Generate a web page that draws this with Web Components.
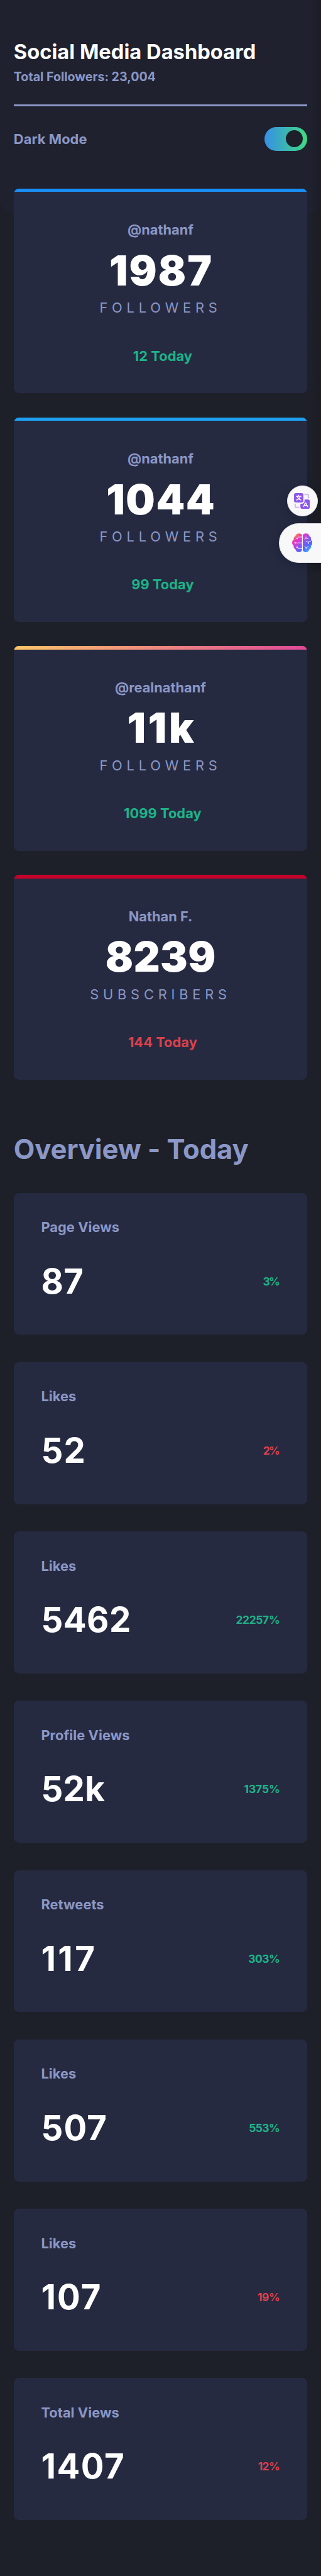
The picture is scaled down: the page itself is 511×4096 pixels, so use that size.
<!DOCTYPE html>
<html lang="en">
<head>
<meta charset="utf-8">
<title>Social Media Dashboard</title>
<style>
  /* 1rem is 100 design pixels of the 750-wide layout */
  html { font-size: 68.1333px; }
  body {
    margin: 0; position: relative; overflow-x: hidden; min-height: 100vh;
    background: #1e2029; color: #fff;
    font-family: Inter, "Liberation Sans", sans-serif;
    --muted: #8b97c6; --card: #252a41; --up: #1db489; --down: #dc414c;
  }
</style>
</head>
<body>
<social-dashboard></social-dashboard>
<side-tools></side-tools>
<script>
const define = (name, html) => customElements.define(name, class extends HTMLElement {
  constructor() {
    super();
    const t = document.createElement('template');
    t.innerHTML = html;
    this.attachShadow({ mode: 'open' }).append(t.content.cloneNode(true));
  }
});

define('mode-toggle', `
<style>
  :host { display: flex; justify-content: flex-end; align-items: center; box-sizing: border-box; width: 1rem; height: .56rem; padding: 0 .1rem;
    border-radius: .28rem; background: linear-gradient(90deg, #378fe6, #3eda82); }
  i { width: .4rem; height: .4rem; border-radius: 50%; background: #1e2029; }
</style><i></i>`);

define('page-header', `
<style>
  :host { display: block; box-sizing: border-box; height: 5rem; padding: .912rem .32rem 0; background: #1f212e; border-radius: 0 0 .4rem .4rem; }
  h1 { margin: 0 0 .113rem; font-size: .48rem; line-height: .6rem; font-weight: 700; }
  p { margin: 0; font-size: .288rem; line-height: .35rem; font-weight: 700; color: var(--muted); }
  hr { margin: .465rem 0 .48rem; border: 0; height: .04rem; background: var(--muted); }
  .row { display: flex; justify-content: space-between; align-items: center; color: var(--muted); font-size: .32rem; line-height: .4rem; font-weight: 700; }
  .row span { margin-top: .014rem; letter-spacing: .0015rem; }
</style>
<h1><slot name="title"></slot></h1><p><slot name="total"></slot></p><hr>
<div class="row"><span>Dark Mode</span><mode-toggle></mode-toggle></div>`);

define('follower-card', `
<style>
  :host { display: flex; flex-direction: column; align-items: center; box-sizing: border-box; height: 4.78rem;
    border-radius: .12rem; overflow: hidden; background: var(--card); }
  .bar { align-self: stretch; height: .08rem; background: var(--brand); margin-bottom: .691rem; }
  .name { font-size: .32rem; line-height: .4rem; font-weight: 700; color: var(--muted); }
  .num { margin-top: .267rem; font-size: .96rem; line-height: .96rem; font-weight: 900; letter-spacing: var(--track); margin-right: calc(var(--track) * -1); }
  .unit { margin-top: .193rem; font-size: .32rem; line-height: .4rem; font-weight: 400; letter-spacing: .1rem; color: var(--muted); text-transform: uppercase; }
  .today { margin-top: .72rem; padding-left: .1rem; font-size: .32rem; line-height: .4rem; font-weight: 700; letter-spacing: .001rem; color: var(--up); }
  :host([down]) .today { color: var(--down); }
</style>
<div class="bar"></div><div class="name"><slot name="name"></slot></div><div class="num"><slot name="num"></slot></div>
<div class="unit"><slot name="unit"></slot></div><div class="today"><slot name="today"></slot></div>`);

define('stat-card', `
<style>
  :host { display: block; box-sizing: border-box; height: 3.312rem; padding: .606rem .64rem 0; border-radius: .12rem; background: var(--card); }
  .label { font-size: .32rem; line-height: .4rem; font-weight: 700; letter-spacing: .001rem; color: var(--muted); }
  .row { margin-top: .65rem; display: flex; justify-content: space-between; align-items: center; }
  .num { font-size: .8rem; line-height: .8rem; font-weight: 700; letter-spacing: var(--track); }
  .pct { margin-top: .03rem; font-size: .256rem; line-height: .325rem; font-weight: 700; letter-spacing: var(--ptrack); margin-right: calc(var(--ptrack) * -1); color: var(--up); }
  :host([down]) .pct { color: var(--down); }
</style>
<div class="label"><slot name="label"></slot></div>
<div class="row"><span class="num"><slot name="num"></slot></span><span class="pct"><slot name="pct"></slot></span></div>`);

/* name, count, unit, change, brand colour, tracking of the count */
const followers = [
  ['@nathanf', '1987', 'Followers', '12 Today', '#198ef5', .030],
  ['@nathanf', '1044', 'Followers', '99 Today', '#1da1f2', .023],
  ['@realnathanf', '11k', 'Followers', '1099 Today', 'linear-gradient(90deg, #fdc468, #df4996)', .054],
  ['Nathan F.', '8239', 'Subscribers', '144 Today', '#c4032a', .005, 'down'],
].map(([n, v, u, t, c, k, d = '']) => `<follower-card ${d} style="--brand:${c};--track:${k}rem"><span slot="name">${n}</span><span slot="num">${v}</span><span slot="unit">${u}</span><span slot="today">${t}</span></follower-card>`).join('');

/* label, value, change, tracking of the value, tracking of the change */
const stats = [
  ['Page Views', '87', '3%', .006, -.0272], ['Likes', '52', '2%', .018, -.0272, 'down'],
  ['Likes', '5462', '22257%', .007, -.0052], ['Profile Views', '52k', '1375%', .005, -.0019],
  ['Retweets', '117', '303%', .050, -.0083], ['Likes', '507', '553%', .017, -.0095],
  ['Likes', '107', '19%', .031, -.0068, 'down'], ['Total Views', '1407', '12%', .022, -.0093, 'down'],
].map(([l, v, p, k, q, d = '']) => `<stat-card ${d} style="--track:${k}rem;--ptrack:${q}rem"><span slot="label">${l}</span><span slot="num">${v}</span><span slot="pct">${p}</span></stat-card>`).join('');

define('social-dashboard', `
<style>
  :host { display: block; box-sizing: border-box; height: 60.1rem; }
  .followers { display: grid; gap: .56rem; margin: -.6rem .32rem 0; }
  h2 { margin: 1.234rem .32rem .606rem; font-size: .64rem; line-height: .8rem; font-weight: 700; letter-spacing: -.0015rem; color: var(--muted); }
  .stats { display: grid; gap: .64rem; margin: 0 .32rem; }
</style>
<page-header><span slot="title">Social Media Dashboard</span><span slot="total">Total Followers: 23,004</span></page-header>
<div class="followers">${followers}</div>
<h2>Overview - Today</h2>
<div class="stats">${stats}</div>`);

/* Helper buttons that float over the right edge of the first screen */
define('side-tools', `
<style>
  :host { position: absolute; top: 0; right: 0; width: 1.2rem; height: 13.34rem; box-sizing: border-box; padding-top: 11.33rem;
    display: flex; flex-direction: column; align-items: flex-end; gap: .165rem; }
  .edge { position: absolute; top: 0; right: 0; width: .25rem; height: 100%; background: linear-gradient(90deg, transparent, rgba(20,18,24,.3)); }
  .btn { position: relative; box-sizing: border-box; background: #f8f8f8; border: 1px solid #e6e4ec; box-shadow: 0 .04rem .2rem rgba(10,10,20,.25); display: flex; align-items: center; }
  .tr { width: .72rem; height: .72rem; border-radius: 50%; margin-right: .08rem; justify-content: center; }
  .ai { width: .98rem; height: .915rem; border-radius: .46rem 0 0 .46rem; border-right: 0; padding-left: .285rem; }
  .tr svg { width: .37rem; height: .373rem; }
  .ai svg { width: .48rem; height: .44rem; }
</style>
<div class="edge"></div>
<div class="btn tr"><svg viewBox="263 152 111 112" fill="none" stroke-linecap="round" stroke-linejoin="round">
  <rect x="308" y="197" width="66" height="66" rx="13" fill="#8c57ea"/>
  <rect x="254" y="143" width="83" height="84" rx="20" fill="#f8f8f8"/>
  <path d="M336 161h20a8 8 0 0 1 8 8v20M272 227v18a8 8 0 0 0 8 8h20" stroke="#d0bdf4" stroke-width="10" stroke-linecap="butt"/>
  <rect x="263" y="152" width="66" height="66" rx="13" fill="#8c57ea"/>
  <path d="M296 167v7M279 175h34M306 176c-4 12-13 21-26 25M286 176c4 12 13 21 26 25" stroke="#fff" stroke-width="5.5"/>
  <path d="M330 247l11-24q3-5 6 0l12 24M337 241q7-6 15 0" stroke="#fff" stroke-width="6"/>
</svg></div>
<div class="btn ai"><svg viewBox="246 435 144 132" fill="none" stroke-linecap="round" stroke-linejoin="round">
  <defs><linearGradient id="g" gradientUnits="userSpaceOnUse" x1="266" y1="445" x2="370" y2="560">
    <stop offset="0" stop-color="#f79a2e"/><stop offset=".2" stop-color="#ee35c0"/><stop offset=".32" stop-color="#d93cd2"/><stop offset=".52" stop-color="#8b55ea"/><stop offset=".75" stop-color="#5566fa"/><stop offset="1" stop-color="#33b2ff"/></linearGradient></defs>
  <path fill="url(#g)" d="M315 450C315 439 301 434 289 436C277 438 270 446 269 455C260 458 255 468 258 478C248 484 243 498 248 510C250 516 254 520 257 522C255 534 261 544 270 548C273 562 284 568 296 567C308 566 315 560 315 550Z"/>
  <path fill="url(#g)" d="M321 450C321 439 335 434 347 436C359 438 366 446 367 455C376 458 381 468 378 478C388 484 393 498 388 510C386 516 382 520 379 522C381 534 375 544 366 548C363 562 352 568 340 567C328 566 321 560 321 550Z"/>
  <path stroke="#fff" stroke-width="3.6" d="M281 470l9-9h25M268 502h47M281 533l9 10h25M343 460v9l-9 7M343 469q7 5 14 4M343 491q11 7 19 5v12M362 496q15-2 20-12M334 529l10 6v10M344 535q6-6 15-5"/>
  <g fill="#fff"><circle cx="281" cy="471" r="5"/><circle cx="268" cy="502" r="5"/><circle cx="281" cy="532" r="5"/></g>
</svg></div>`);
</script>
</body>
</html>
